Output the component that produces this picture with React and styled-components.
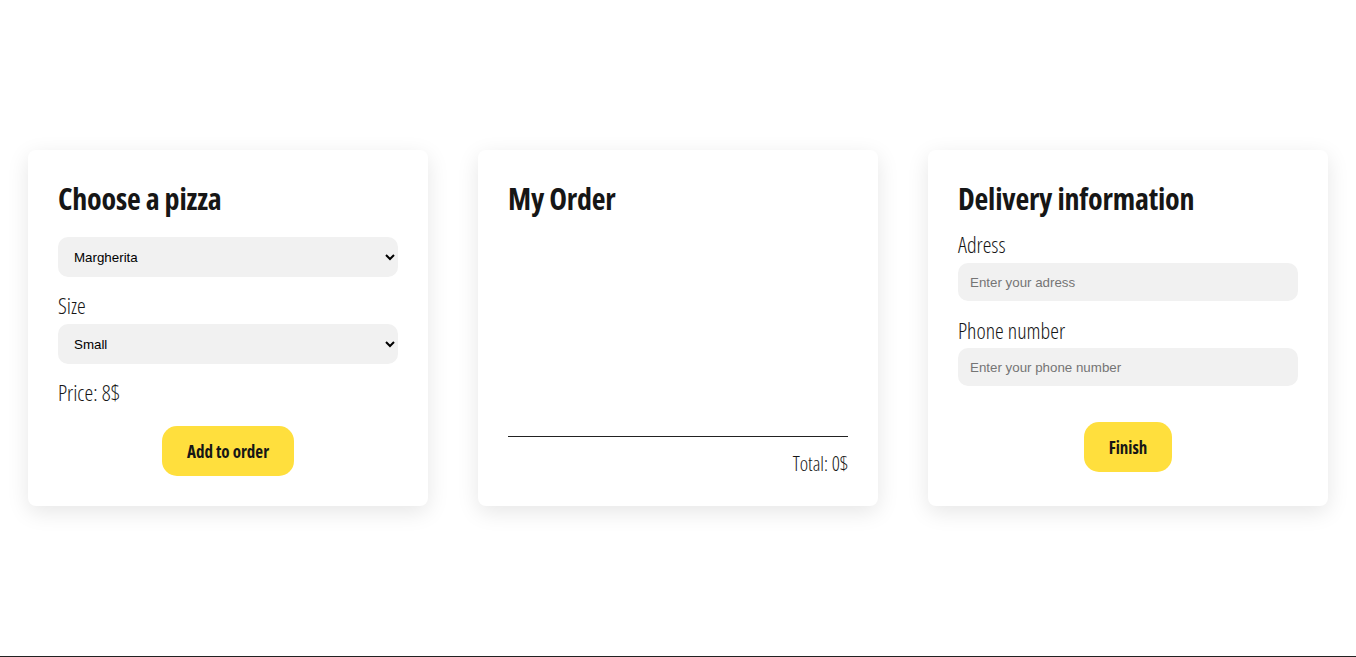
import React from "react";
import styled, { createGlobalStyle } from "styled-components";

const GlobalStyle = createGlobalStyle`
    * {
        box-sizing: border-box;
    }
    body {
        margin: 0;
        background: #ffffff;
        font-family: "Open Sans", "Roboto Condensed", sans-serif;
        font-stretch: 75%;
        color: #161616;
    }
`;

const Page = styled.main`
    height: 100vh;
    border-bottom: 1px solid #222;
    display: flex;
    align-items: center;
    justify-content: center;
`;

const Row = styled.div`
    display: flex;
    align-items: stretch;
`;

const Card = styled.section`
    width: 400px;
    margin: 0 25px;
    padding: 30px;
    background: #fff;
    border-radius: 8px;
    box-shadow: 0 6px 22px rgba(0, 0, 0, 0.1);
    display: flex;
    flex-direction: column;
`;

const Title = styled.h1`
    margin: 0;
    font-size: 30px;
    line-height: 38px;
    font-weight: 700;
    letter-spacing: -0.2px;
`;

const Label = styled.label`
    display: block;
    margin-top: ${p => p.$top || 15}px;
    font-size: 22px;
    line-height: 26px;
    font-weight: 300;
`;

const Select = styled.select`
    display: block;
    width: 100%;
    height: 40px;
    margin-top: ${p => p.$top || 6}px;
    padding: 0 12px;
    border: none;
    border-radius: 10px;
    background: #f1f1f1;
    font-family: "Liberation Sans", Arial, sans-serif;
    font-stretch: normal;
    font-size: 13.33px;
    color: #000;
    outline: none;
`;

const Input = styled.input`
    display: block;
    width: 100%;
    height: 38px;
    margin-top: ${p => p.$top || 6}px;
    padding: 0 12px;
    border: none;
    border-radius: 10px;
    background: #f1f1f1;
    font-family: "Liberation Sans", Arial, sans-serif;
    font-stretch: normal;
    font-size: 13.33px;
    outline: none;
    &::placeholder {
        color: #757575;
    }
`;

const Price = styled.p`
    margin: 15px 0 0;
    font-size: 22px;
    line-height: 26px;
    font-weight: 300;
`;

const Button = styled.button`
    align-self: center;
    height: 50px;
    margin-top: ${p => p.$top}px;
    padding: 0 25px;
    border: none;
    border-radius: 15px;
    background: #ffdf3d;
    color: #161616;
    font-family: inherit;
    font-stretch: 75%;
    font-size: 17px;
    font-weight: 700;
    cursor: pointer;
`;

const OrderList = styled.ul`
    flex: 1;
    margin: 0;
    padding: 0;
    list-style: none;
`;

const Divider = styled.hr`
    margin: 0;
    border: none;
    border-top: 1px solid #222;
`;

const Total = styled.p`
    margin: 15px 0 0;
    text-align: right;
    font-size: 20px;
    line-height: 24px;
    font-weight: 300;
`;

const App = () => {
    return (
        <>
            <GlobalStyle />
            <Page>
                <Row>
                    <Card>
                        <Title>Choose a pizza</Title>
                        <Select $top={19} defaultValue="Margherita">
                            <option>Margherita</option>
                            <option>Pepperoni</option>
                            <option>Quattro Formaggi</option>
                        </Select>
                        <Label>Size</Label>
                        <Select defaultValue="Small">
                            <option>Small</option>
                            <option>Medium</option>
                            <option>Large</option>
                        </Select>
                        <Price>Price: 8$</Price>
                        <Button $top={21}>Add to order</Button>
                    </Card>
                    <Card>
                        <Title>My Order</Title>
                        <OrderList />
                        <Divider />
                        <Total>Total: 0$</Total>
                    </Card>
                    <Card>
                        <Title>Delivery information</Title>
                        <Label $top={13}>Adress</Label>
                        <Input placeholder="Enter your adress" />
                        <Label $top={16}>Phone number</Label>
                        <Input $top={5} placeholder="Enter your phone number" />
                        <Button $top={36}>Finish</Button>
                    </Card>
                </Row>
            </Page>
        </>
    );
};

export default App;
